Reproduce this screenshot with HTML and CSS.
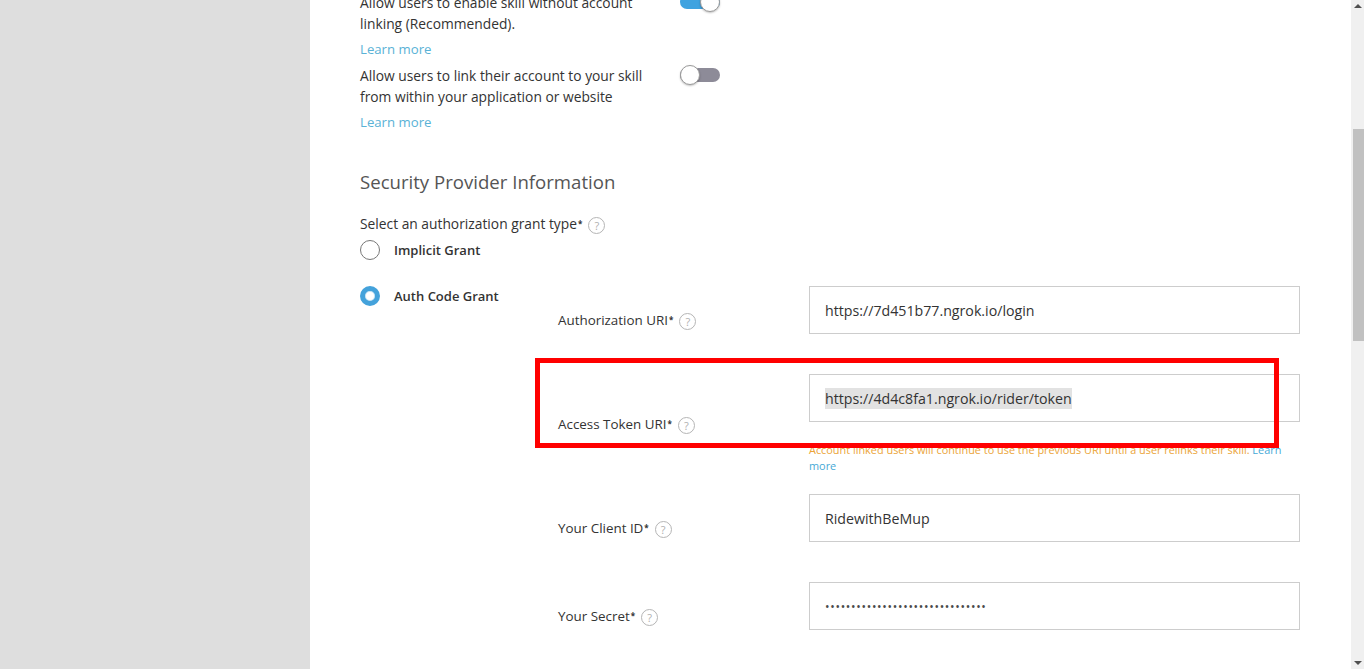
FILE: index.html
```html
<!DOCTYPE html>
<html lang="en">
<head>
<meta charset="utf-8">
<title>Account Linking</title>
<link rel="stylesheet" href="styles.css">
</head>
<body>
<div class="app">
  <aside class="side"></aside>
  <main class="main">
    <div class="content">
      <div class="opt">
        <div class="opt-text">
          <p class="opt-desc">Allow users to enable skill without account linking (Recommended).</p>
          <a class="learn" href="#">Learn more</a>
        </div>
        <span class="toggle on"><span class="knob"></span></span>
      </div>
      <div class="opt">
        <div class="opt-text">
          <p class="opt-desc">Allow users to link their account to your skill from within your application or website</p>
          <a class="learn" href="#">Learn more</a>
        </div>
        <span class="toggle"><span class="knob"></span></span>
      </div>

      <h2 class="section-title">Security Provider Information</h2>

      <div class="grant-label">Select an authorization grant type<sup>*</sup> <span class="help">?</span></div>

      <div class="radio-row">
        <div class="radio-item"><span class="radio"></span><span class="radio-text">Implicit Grant</span></div>
      </div>
      <div class="radio-row grant">
        <div class="radio-item"><span class="radio checked"></span><span class="radio-text">Auth Code Grant</span></div>
        <div class="fields">
          <div class="field-row">
            <div class="field-label">Authorization URI<sup>*</sup> <span class="help">?</span></div>
            <div class="field-body">
              <div class="input">https://7d451b77.ngrok.io/login</div>
            </div>
          </div>
          <div class="field-row tight">
            <div class="field-label">Access Token URI<sup>*</sup> <span class="help">?</span></div>
            <div class="field-body">
              <div class="input"><span class="sel">https://4d4c8fa1.ngrok.io/rider/token</span></div>
              <p class="hint">Account linked users will continue to use the previous URI until a user relinks their skill. <a href="#" class="hint-link">Learn more</a></p>
            </div>
            <div class="annot"></div>
          </div>
          <div class="field-row">
            <div class="field-label">Your Client ID<sup>*</sup> <span class="help">?</span></div>
            <div class="field-body">
              <div class="input">RidewithBeMup</div>
            </div>
          </div>
          <div class="field-row">
            <div class="field-label">Your Secret<sup>*</sup> <span class="help">?</span></div>
            <div class="field-body">
              <div class="input dots">•••••••••••••••••••••••••••••••</div>
            </div>
          </div>
          <div class="field-row">
            <div class="field-label"></div>
            <div class="field-body">
              <div class="input"></div>
            </div>
          </div>
        </div>
      </div>
    </div>
  </main>
  <div class="scrollbar">
    <span class="arrow up"></span>
    <div class="thumb"></div>
    <span class="arrow down"></span>
  </div>
</div>
</body>
</html>
```

FILE: styles.css
```css
* { box-sizing: border-box; }
html, body { margin: 0; padding: 0; }
body {
  font-family: "Open Sans", "Noto Sans", Arial, sans-serif;
  font-size: 13.8px;
  color: #333;
  background: #dedede;
  overflow: hidden;
}
.app {
  display: flex;
  height: 669px;
  overflow: hidden;
}
.side {
  width: 310px;
  flex: none;
  background: #dedede;
}
.main {
  flex: 1;
  background: #fff;
  overflow: hidden;
}
.content {
  margin-top: -8px;
  padding: 0 51px 0 50px;
}

/* options with toggles */
.opt {
  display: flex;
  align-items: flex-start;
  margin-bottom: 5px;
}
.opt-text { width: 296px; margin-right: 24px; }
.opt-desc {
  margin: 0;
  line-height: 21px;
}
.learn {
  display: block;
  margin-top: 5px;
  line-height: 21px;
  font-size: 13.2px;
  color: #5ab2d6;
  text-decoration: none;
}
.toggle {
  position: relative;
  display: block;
  width: 40px;
  height: 14px;
  margin-top: 3px;
  border-radius: 7px;
  background: #8d8b98;
  flex: none;
}
.toggle.on { background: #3fa3e0; }
.knob {
  position: absolute;
  left: 0;
  top: -3px;
  width: 20px;
  height: 20px;
  border-radius: 50%;
  background: #fff;
  border: 1px solid #9a9a9a;
  box-shadow: 0 1px 2px rgba(0,0,0,0.25);
}
.toggle.on .knob { left: 20px; }

.section-title {
  margin: 37px 0 0;
  font-size: 18.6px;
  font-weight: 400;
  line-height: 24px;
  color: #555;
}
.grant-label {
  margin-top: 19px;
  line-height: 21px;
  display: flex;
  align-items: center;
}
sup {
  font-size: 8px;
  font-weight: 700;
  line-height: 0;
  vertical-align: 6px;
  margin-left: 1px;
}
.help {
  display: inline-flex;
  align-items: center;
  justify-content: center;
  width: 17px;
  height: 17px;
  margin-left: 6px;
  margin-top: 3px;
  border: 1px solid #b5b5b5;
  border-radius: 50%;
  color: #b0b0b0;
  font-size: 11px;
  line-height: 1;
  flex: none;
}

.radio-row {
  display: flex;
  align-items: flex-start;
  margin-top: 6px;
}
.radio-row.grant { margin-top: 26px; }
.radio-item {
  width: 198px;
  flex: none;
  display: flex;
  align-items: center;
  height: 20px;
}
.radio {
  width: 20px;
  height: 20px;
  border-radius: 50%;
  border: 1px solid #777;
  background: #fff;
  flex: none;
}
.radio.checked {
  border: 5px solid #44a2db;
  box-shadow: inset 0 0 0 1px #cfe6f5;
}
.radio-text {
  margin-left: 14px;
  font-size: 13px;
  font-weight: 600;
  color: #333;
}

.fields {
  flex: 1;
  display: flex;
  flex-direction: column;
  gap: 20px;
}
.field-row {
  position: relative;
  display: flex;
  align-items: center;
}
.field-label {
  width: 251px;
  flex: none;
  display: flex;
  align-items: center;
  font-size: 13.4px;
  color: #333;
}
.field-body {
  width: 491px;
  flex: none;
  padding-bottom: 20px;
}
.field-row.tight .field-body { padding-bottom: 0; }
.input {
  height: 48px;
  border: 1px solid #cdcdcd;
  padding: 0 15px;
  display: flex;
  align-items: center;
  color: #333;
  font-size: 14.2px;
  white-space: nowrap;
}
.sel { background: #e2e2e2; padding: 1px 0; }
.dots { letter-spacing: 0.7px; font-size: 12px; color: #4a4a4a; }
.hint {
  margin: 20px 0 0;
  font-size: 10.9px;
  line-height: 16px;
  color: #eba437;
}
.hint-link { color: #46a9d6; text-decoration: none; }
.annot {
  position: absolute;
  left: -23px;
  top: -16px;
  width: 744px;
  height: 90px;
  border: 5px solid #ff0000;
  pointer-events: none;
}

/* fake scrollbar */
.scrollbar {
  width: 13px;
  flex: none;
  background: #f0f0f0;
  display: flex;
  flex-direction: column;
  align-items: center;
  padding: 4px 0;
}
.arrow {
  width: 0;
  height: 0;
  border-left: 4px solid transparent;
  border-right: 4px solid transparent;
}
.arrow.up { border-bottom: 4px solid #505050; }
.arrow.down { border-top: 4px solid #505050; margin-top: auto; }
.thumb {
  width: 11px;
  margin-left: 2px;
  height: 212px;
  margin-top: 121px;
  background: #c1c1c1;
}
```
